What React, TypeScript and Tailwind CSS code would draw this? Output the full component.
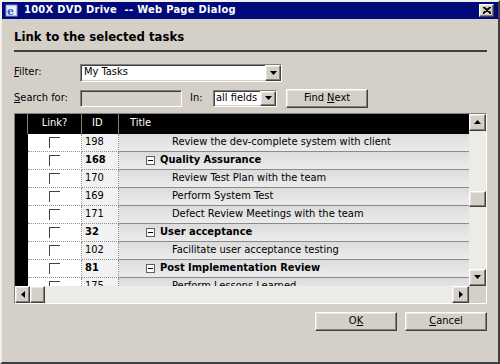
import React from "react"

const rows = [
  { id: "198", title: "Review the dev-complete system with client", group: false },
  { id: "168", title: "Quality Assurance", group: true },
  { id: "170", title: "Review Test Plan with the team", group: false },
  { id: "169", title: "Perform System Test", group: false },
  { id: "171", title: "Defect Review Meetings with the team", group: false },
  { id: "32", title: "User acceptance", group: true },
  { id: "102", title: "Facilitate user acceptance testing", group: false },
  { id: "81", title: "Post Implementation Review", group: true },
  { id: "175", title: "Perform Lessons Learned", group: false },
]

const raised = "border border-t-white border-l-white border-b-[#404040] border-r-[#404040] shadow-[inset_-1px_-1px_#808080,inset_1px_1px_#e8e6e0]"
const sunken = "border border-t-[#808080] border-l-[#808080] border-b-white border-r-white shadow-[inset_1px_1px_#404040,inset_-1px_-1px_#d4d0c8]"

function Arrow({ dir }: { dir: "up" | "down" | "left" | "right" }) {
  const pts = { up: "0,4 7,4 3.5,0", down: "0,0 7,0 3.5,4", left: "4,0 4,7 0,3.5", right: "0,0 0,7 4,3.5" }[dir]
  const w = dir === "up" || dir === "down" ? 7 : 4
  const h = dir === "up" || dir === "down" ? 4 : 7
  return <svg width={w} height={h} viewBox={`0 0 ${w} ${h}`}><polygon points={pts} fill="#000" /></svg>
}

function ScrollBtn({ dir, className = "" }: { dir: "up" | "down" | "left" | "right"; className?: string }) {
  return <div className={`${raised} bg-[#d4d0c8] flex items-center justify-center ${className}`}><Arrow dir={dir} /></div>
}

function Check() {
  return <div className="w-[11px] h-[11px] bg-white border-t border-l border-t-[#404040] border-l-[#404040] shadow-[1px_1px_#fff]" />
}

function Collapse() {
  return (
    <div className="w-[9px] h-[9px] border border-[#606060] bg-white flex items-center justify-center mr-[5px]">
      <div className="w-[5px] h-px bg-black" />
    </div>
  )
}

function DropBtn() {
  return <div className={`${raised} w-[16px] h-full bg-[#d4d0c8] flex items-center justify-center`}><Arrow dir="down" /></div>
}

export default function App() {
  return (
    <div className="w-[500px] h-[364px] bg-[#d4d0c8] flex flex-col overflow-hidden border-l-2 border-t-2 border-r-2 border-b-2 border-l-[#f0efea] border-t-[#f0efea] border-r-[#404040] border-b-[#404040] text-[11px] text-black" style={{ fontFamily: "Tahoma, 'DejaVu Sans Condensed', 'DejaVu Sans', sans-serif" }}>
      {/* title bar */}
      <div className="h-[17px] bg-[#000a7a] flex items-center pl-[3px] pr-[4px] shrink-0">
        <div className="w-[14px] h-[13px] mr-[5px] flex items-center justify-center">
          <svg width="14" height="13" viewBox="0 0 14 13">
            <rect x="1" y="1" width="11" height="11" fill="#e8eefc" stroke="#7e8fbf" />
            <text x="2" y="11" fontSize="11" fontWeight="bold" fill="#1e5dd8" fontFamily="DejaVu Serif, serif">e</text>
          </svg>
        </div>
        <span className="text-white font-bold text-[11px] tracking-[0.3px] whitespace-pre">100X DVD Drive  -- Web Page Dialog</span>
        <div className={`${raised} ml-auto w-[15px] h-[13px] bg-[#d4d0c8] flex items-center justify-center`}>
          <svg width="8" height="7" viewBox="0 0 8 7"><path d="M0 0 L8 7 M8 0 L0 7 M1 0 L8 6 M7 0 L0 6" stroke="#000" strokeWidth="1.2" /></svg>
        </div>
      </div>

      <div className="flex flex-col pl-[12px] pr-[11px] pt-[8px]">
        {/* heading */}
        <div className="text-[13px] font-bold pb-[3px] border-b-2 border-b-[#404040]">Link to the selected tasks</div>

        {/* filter */}
        <div className="flex items-center mt-[12px] h-[18px]">
          <div className="w-[66px]"><span className="underline">F</span>ilter:</div>
          <div className={`${sunken} w-[202px] h-[18px] bg-white flex items-center`}>
            <span className="flex-1 pl-[3px]">My Tasks</span>
            <DropBtn />
          </div>
        </div>

        {/* search */}
        <div className="flex items-center mt-[7px] h-[19px]">
          <div className="w-[66px]"><span className="underline">S</span>earch for:</div>
          <div className={`${sunken} w-[102px] h-[17px] bg-[#d4d0c8]`} />
          <div className="ml-[8px] w-[23px]">In:</div>
          <div className={`${sunken} w-[64px] h-[17px] bg-white flex items-center`}>
            <span className="flex-1 pl-[2px] whitespace-nowrap overflow-hidden">all fields</span>
            <DropBtn />
          </div>
          <div className={`${raised} ml-[9px] w-[82px] h-[19px] bg-[#d4d0c8] flex items-center justify-center`}>Find <span className="underline ml-[3px]">N</span>ext</div>
        </div>

        {/* table */}
        <div className={`${sunken} mt-[5px] h-[191px] bg-[#d4d0c8] flex flex-col overflow-hidden`}>
          <div className="flex flex-1 min-h-0">
            <div className="flex-1 flex flex-col overflow-hidden">
              <div className="h-[20px] bg-black text-white flex shrink-0">
                <div className="w-[13px] border-r border-r-[#808080]" />
                <div className="w-[54px] border-r border-r-[#808080] flex items-center justify-center">Link?</div>
                <div className="w-[37px] border-r border-r-[#808080] flex items-center pl-[10px]">ID</div>
                <div className="flex-1 flex items-center pl-[11px]">Title</div>
              </div>
              {rows.map(r => (
                <div key={r.id} className="h-[18px] flex shrink-0">
                  <div className="w-[13px] bg-black" />
                  <div className="w-[54px] bg-white border-b border-dotted border-b-[#909090] border-r border-r-[#909090] flex items-center justify-center pt-px"><Check /></div>
                  <div className={`w-[37px] bg-[#f2f2f2] border-b border-dotted border-b-[#909090] border-r border-r-[#909090] flex items-center pl-[3px] ${r.group ? "font-bold" : ""}`}>{r.id}</div>
                  <div className={`flex-1 bg-gradient-to-b from-[#dcdcdc] to-[#ececec] border-b border-b-[#8a8a8a] flex items-center whitespace-nowrap ${r.group ? "font-bold pl-[27px]" : "pl-[53px]"}`}>
                    {r.group && <Collapse />}
                    {r.title}
                  </div>
                </div>
              ))}
            </div>
            {/* vertical scrollbar */}
            <div className="w-[17px] flex flex-col bg-[#ecebe6]">
              <ScrollBtn dir="up" className="h-[17px] w-[17px]" />
              <div className="h-[60px]" />
              <div className={`${raised} h-[16px] bg-[#d4d0c8]`} />
              <div className="flex-1" />
              <ScrollBtn dir="down" className="h-[17px] w-[17px]" />
            </div>
          </div>
          {/* horizontal scrollbar */}
          <div className="h-[17px] flex bg-[#ecebe6] shrink-0">
            <ScrollBtn dir="left" className="w-[15px] h-[17px]" />
            <div className={`${raised} w-[15px] h-[17px] bg-[#d4d0c8]`} />
            <div className="flex-1" />
            <ScrollBtn dir="right" className="w-[17px] h-[17px]" />
            <div className="w-[17px] bg-[#d4d0c8]" />
          </div>
        </div>

        {/* buttons */}
        <div className="flex justify-end gap-[8px] mt-[8px]">
          <div className={`${raised} w-[82px] h-[19px] bg-[#d4d0c8] flex items-center justify-center`}>O<span className="underline">K</span></div>
          <div className={`${raised} w-[82px] h-[19px] bg-[#d4d0c8] flex items-center justify-center`}><span className="underline">C</span>ancel</div>
        </div>
      </div>
    </div>
  )
}
